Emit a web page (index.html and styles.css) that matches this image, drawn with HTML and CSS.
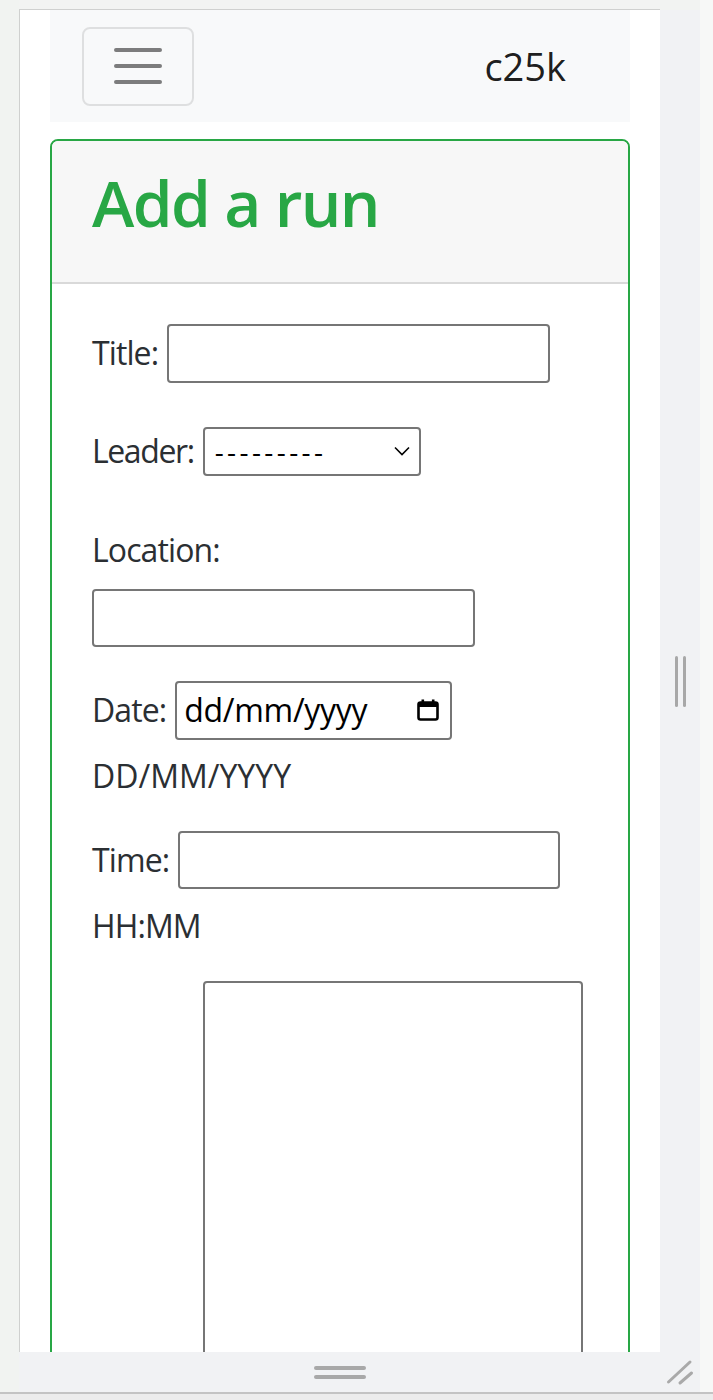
FILE: index.html
```html
<!DOCTYPE html>
<html lang="en">
<head>
<meta charset="utf-8">
<title>c25k - Add a run</title>
<link rel="stylesheet" href="styles.css">
</head>
<body>
<div class="screen">
  <div class="workspace">
    <div class="gutter-left"></div>
    <div class="device">
      <div class="frame">
        <div class="page">
          <nav class="navbar">
            <button class="toggler" type="button" aria-label="Toggle navigation">
              <svg width="60" height="60" viewBox="0 0 30 30"><path d="M4 7h22M4 15h22M4 23h22" stroke="rgba(0,0,0,0.5)" stroke-width="2" stroke-linecap="round" fill="none"/></svg>
            </button>
            <span class="brand">c25k</span>
          </nav>
          <div class="card">
            <div class="card-header"><h1>Add a run</h1></div>
            <div class="card-body">
              <form class="run-form">
                <div class="field row-title"><label>Title:</label><input class="text-input w-title" type="text"></div>
                <div class="field row-leader"><label class="tight">Leader:</label>
                  <div class="select-box"><span class="select-value">---------</span>
                    <svg class="chevron" width="16" height="10" viewBox="0 0 16 10"><path d="M1 1.5l7 7 7-7" stroke="#000" stroke-width="1.6" fill="none"/></svg>
                  </div>
                </div>
                <div class="line-label row-location">Location:</div>
                <input class="text-input w-location row-location-input" type="text">
                <div class="field row-date"><label>Date:</label>
                  <div class="date-box"><span class="date-value">dd/mm/yyyy</span>
                    <svg class="cal" width="26" height="26" viewBox="0 0 26 26"><rect x="3.5" y="5.5" width="19" height="17" rx="2" stroke="#000" stroke-width="2.6" fill="none"/><rect x="3" y="5" width="20" height="5" fill="#000"/><rect x="6.5" y="2.5" width="2.6" height="4" fill="#000"/><rect x="16.9" y="2.5" width="2.6" height="4" fill="#000"/></svg>
                  </div>
                </div>
                <div class="help help-wide row-datehelp">DD/MM/YYYY</div>
                <div class="field row-time"><label>Time:</label><input class="text-input w-time" type="text"></div>
                <div class="help row-timehelp">HH:MM</div>
                <textarea class="notes"></textarea>
              </form>
            </div>
          </div>
        </div>
      </div>
      <div class="side-handle"><span class="grip-v"></span><span class="grip-v"></span></div>
      <div class="bottom-handle"><span class="grip-h"></span><span class="grip-h"></span></div>
      <div class="corner">
        <svg width="40" height="40" viewBox="0 0 40 40"><path d="M8.5 30L30 10M20 31l11.5-10" stroke="#a9a9a9" stroke-width="3" stroke-linecap="round" fill="none"/></svg>
      </div>
    </div>
    <div class="gutter-right"></div>
  </div>
  <div class="hscroll"></div>
</div>
</body>
</html>
```

FILE: styles.css
```css
* { box-sizing: border-box; }
html, body { margin: 0; padding: 0; }
body {
  width: 713px;
  height: 1400px;
  overflow: hidden;
  background: #f2f3f2;
  font-family: "Open Sans", "Noto Sans", sans-serif;
  color: #212529;
}
.screen { display: flex; flex-direction: column; height: 1400px; }
.workspace { display: flex; height: 1392px; }
.gutter-left { width: 19px; background: #f1f3f1; }
.gutter-right { flex: 1; background: #f7f8f7; }
.device {
  display: grid;
  grid-template-columns: 641px 40px;
  grid-template-rows: 1343px 40px;
  margin-top: 9px;
}
.frame {
  background: #fff;
  border-top: 1px solid #cfd0cf;
  border-left: 1px solid #cfd0cf;
  overflow: hidden;
}
.side-handle {
  background: #f1f2f4;
  margin-top: 1px;
  display: flex;
  align-items: center;
  justify-content: center;
  gap: 5px;
}
.grip-v { width: 3px; height: 51px; background: #a8a8a8; border-radius: 2px; }
.bottom-handle {
  background: #f1f2f4;
  display: flex;
  flex-direction: column;
  align-items: center;
  justify-content: center;
  gap: 5px;
}
.grip-h { width: 52px; height: 4px; background: #a8a8a8; border-radius: 2px; }
.corner { background: #f1f2f4; }
.corner svg { display: block; }
.hscroll { height: 8px; border-top: 2px solid #c3c3c3; background: #ececec; }

/* page */
.page { padding: 0 30px; }
.navbar {
  background: #f8f9fa;
  height: 112px;
  padding: 0 64px 0 32px;
  display: flex;
  align-items: center;
  justify-content: space-between;
}
.toggler {
  width: 112px;
  height: 79px;
  border: 2px solid rgba(0,0,0,0.1);
  border-radius: 8px;
  background: transparent;
  padding: 0;
  display: flex;
  align-items: center;
  justify-content: center;
}
.toggler svg { display: block; }
.brand {
  font-size: 38px;
  color: rgba(0,0,0,0.9);
  line-height: 1;
}
.card {
  margin-top: 17px;
  border: 2px solid #28a745;
  border-radius: 8px;
  overflow: hidden;
}
.card-header {
  background: #f7f7f7;
  border-bottom: 2px solid #d9d9d9;
  padding: 24px 40px;
}
.card-header h1 {
  margin: 0 0 16px;
  font-size: 64px;
  line-height: 76.8px;
  font-weight: 600;
  color: #28a745;
  letter-spacing: -1.6px;
}
.card-body { padding: 40px 40px 40px 40px; }
.run-form { display: flex; flex-direction: column; align-items: flex-start; }
.field { display: flex; align-items: center; gap: 9px; }
.field label, .line-label, .help {
  font-size: 32px;
  line-height: 48px;
  letter-spacing: -0.9px;
  color: #2b2f33;
}
.field label.tight { letter-spacing: -1.4px; }
.help.help-wide { letter-spacing: 0; }
.text-input {
  border: 2px solid #767676;
  border-radius: 4px;
  background: #fff;
  font: inherit;
  margin: 0;
  padding: 0 4px;
}
.w-title { width: 383px; height: 59px; }
.w-location { width: 383px; height: 58px; }
.w-time { width: 382px; height: 58px; }
.select-box {
  width: 218px;
  height: 49px;
  border: 2px solid #767676;
  border-radius: 4px;
  display: flex;
  align-items: center;
  justify-content: space-between;
  padding: 0 9px 0 10px;
}
.select-value { font-size: 28px; letter-spacing: 3.4px; color: #000; line-height: 1; }
.date-box {
  width: 277px;
  height: 59px;
  border: 2px solid #767676;
  border-radius: 4px;
  display: flex;
  align-items: center;
  justify-content: space-between;
  padding: 0 9px 0 7px;
}
.date-value { font-size: 32px; color: #000; letter-spacing: -0.3px; line-height: 1; }
.cal { display: block; }
.row-title { margin-top: 0; }
.row-leader { margin-top: 44px; }
.row-location { margin-top: 50px; }
.row-location-input { margin-top: 15px; }
.row-date { margin-top: 34px; }
.row-datehelp { margin-top: 12px; }
.row-time { margin-top: 31px; }
.row-timehelp { margin-top: 13px; }
.notes {
  margin: 31px 0 0 111px;
  width: 380px;
  height: 520px;
  border: 2px solid #767676;
  border-radius: 4px;
  resize: none;
  font: inherit;
}
```
